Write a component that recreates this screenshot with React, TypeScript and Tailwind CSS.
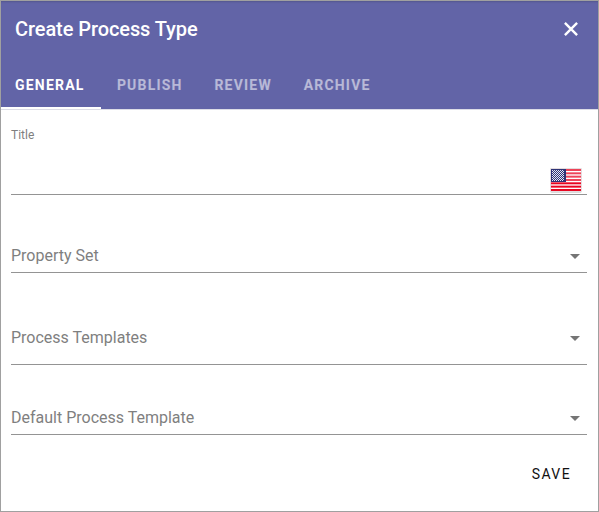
import React from 'react';

const tabs = ['General', 'Publish', 'Review', 'Archive'];

function Flag() {
  const stripes = Array.from({ length: 7 }, (_, i) => i);
  const stars = Array.from({ length: 72 }, (_, i) => i);
  return (
    <svg width="32" height="26" viewBox="0 0 32 26" aria-label="English (United States)">
      <rect x="0.5" y="2" width="31" height="23" rx="1" fill="#000" opacity="0.14" />
      <rect x="0" y="0" width="32" height="24" rx="1" fill="#e4dcdf" />
      <rect x="1" y="1" width="30" height="22" fill="#fff" />
      {stripes.map((i) => (
        <rect key={i} x="1" y={1 + i * 3.33} width="30" height="2" fill={i < 4 ? '#ee4358' : '#e8041f'} />
      ))}
      <rect x="1" y="1" width="15" height="13" fill="#2f3477" />
      {stars.slice(0, 66).map((i) => (
        <rect
          key={i}
          x={2 + (i % 6) * 2 + (Math.floor(i / 6) % 2 ? 1 : 0)}
          y={2 + Math.floor(i / 6)}
          width="1"
          height="1"
          fill="#e4e5f2"
        />
      ))}
    </svg>
  );
}

function SelectField({ label, className }: { label: string; className: string }) {
  return (
    <div className={`flex justify-between border-b border-[#949494] ${className}`}>
      <span className="text-base leading-6 text-[#7f7f7f]">{label}</span>
      <svg className="mt-[10px] mr-[7px]" width="10" height="5" viewBox="0 0 10 5">
        <path d="M0 0h10L5 5z" fill="#757575" />
      </svg>
    </div>
  );
}

export default function App() {
  return (
    <div className="flex h-[512px] w-[599px] flex-col border border-[#a0a0a0] bg-white font-['Roboto',sans-serif]">
      <header className="flex h-[109px] shrink-0 flex-col justify-between border-b border-[#dcdce6] bg-[#6264a7] shadow-[inset_0_2px_2px_-1px_rgba(0,0,0,0.15)]">
        <div className="flex h-14 items-center justify-between pr-5 pl-[14px]">
          <h1 className="text-xl font-medium tracking-[-0.08px] text-white">Create Process Type</h1>
          <button aria-label="Close">
            <svg width="14" height="14" viewBox="0 0 14 14">
              <path d="M0.9 0.9l12.2 12.2M13.1 0.9L0.9 13.1" stroke="#fff" strokeWidth="2.4" />
            </svg>
          </button>
        </div>
        <nav className="flex h-12">
          {tabs.map((tab, i) => (
            <button
              key={tab}
              className={`border-b-2 pt-0.5 text-sm font-bold tracking-[1.2px] uppercase ${
                i === 0 ? 'w-[100px] border-white pl-[14px] text-left text-white' : 'border-transparent px-[15.9px] text-white/55'
              }`}
            >
              {tab}
            </button>
          ))}
        </nav>
      </header>
      <main className="flex flex-1 flex-col pr-[11px] pl-[10px]">
        <div className="flex h-[85px] flex-col justify-between border-b border-[#949494] pt-[15px]">
          <label className="text-xs leading-5 text-[#7f7f7f]">Title</label>
          <div className="mr-[5px] flex h-[26px] justify-end">
            <Flag />
          </div>
        </div>
        <SelectField label="Property Set" className="mt-[49px] h-[29px]" />
        <SelectField label="Process Templates" className="mt-[53px] h-[39px]" />
        <SelectField label="Default Process Template" className="mt-[41px] h-[29px]" />
        <button className="mt-[21px] mr-4 self-end text-sm leading-9 font-normal tracking-[1.4px] text-[#111]">
          SAVE
        </button>
      </main>
    </div>
  );
}
